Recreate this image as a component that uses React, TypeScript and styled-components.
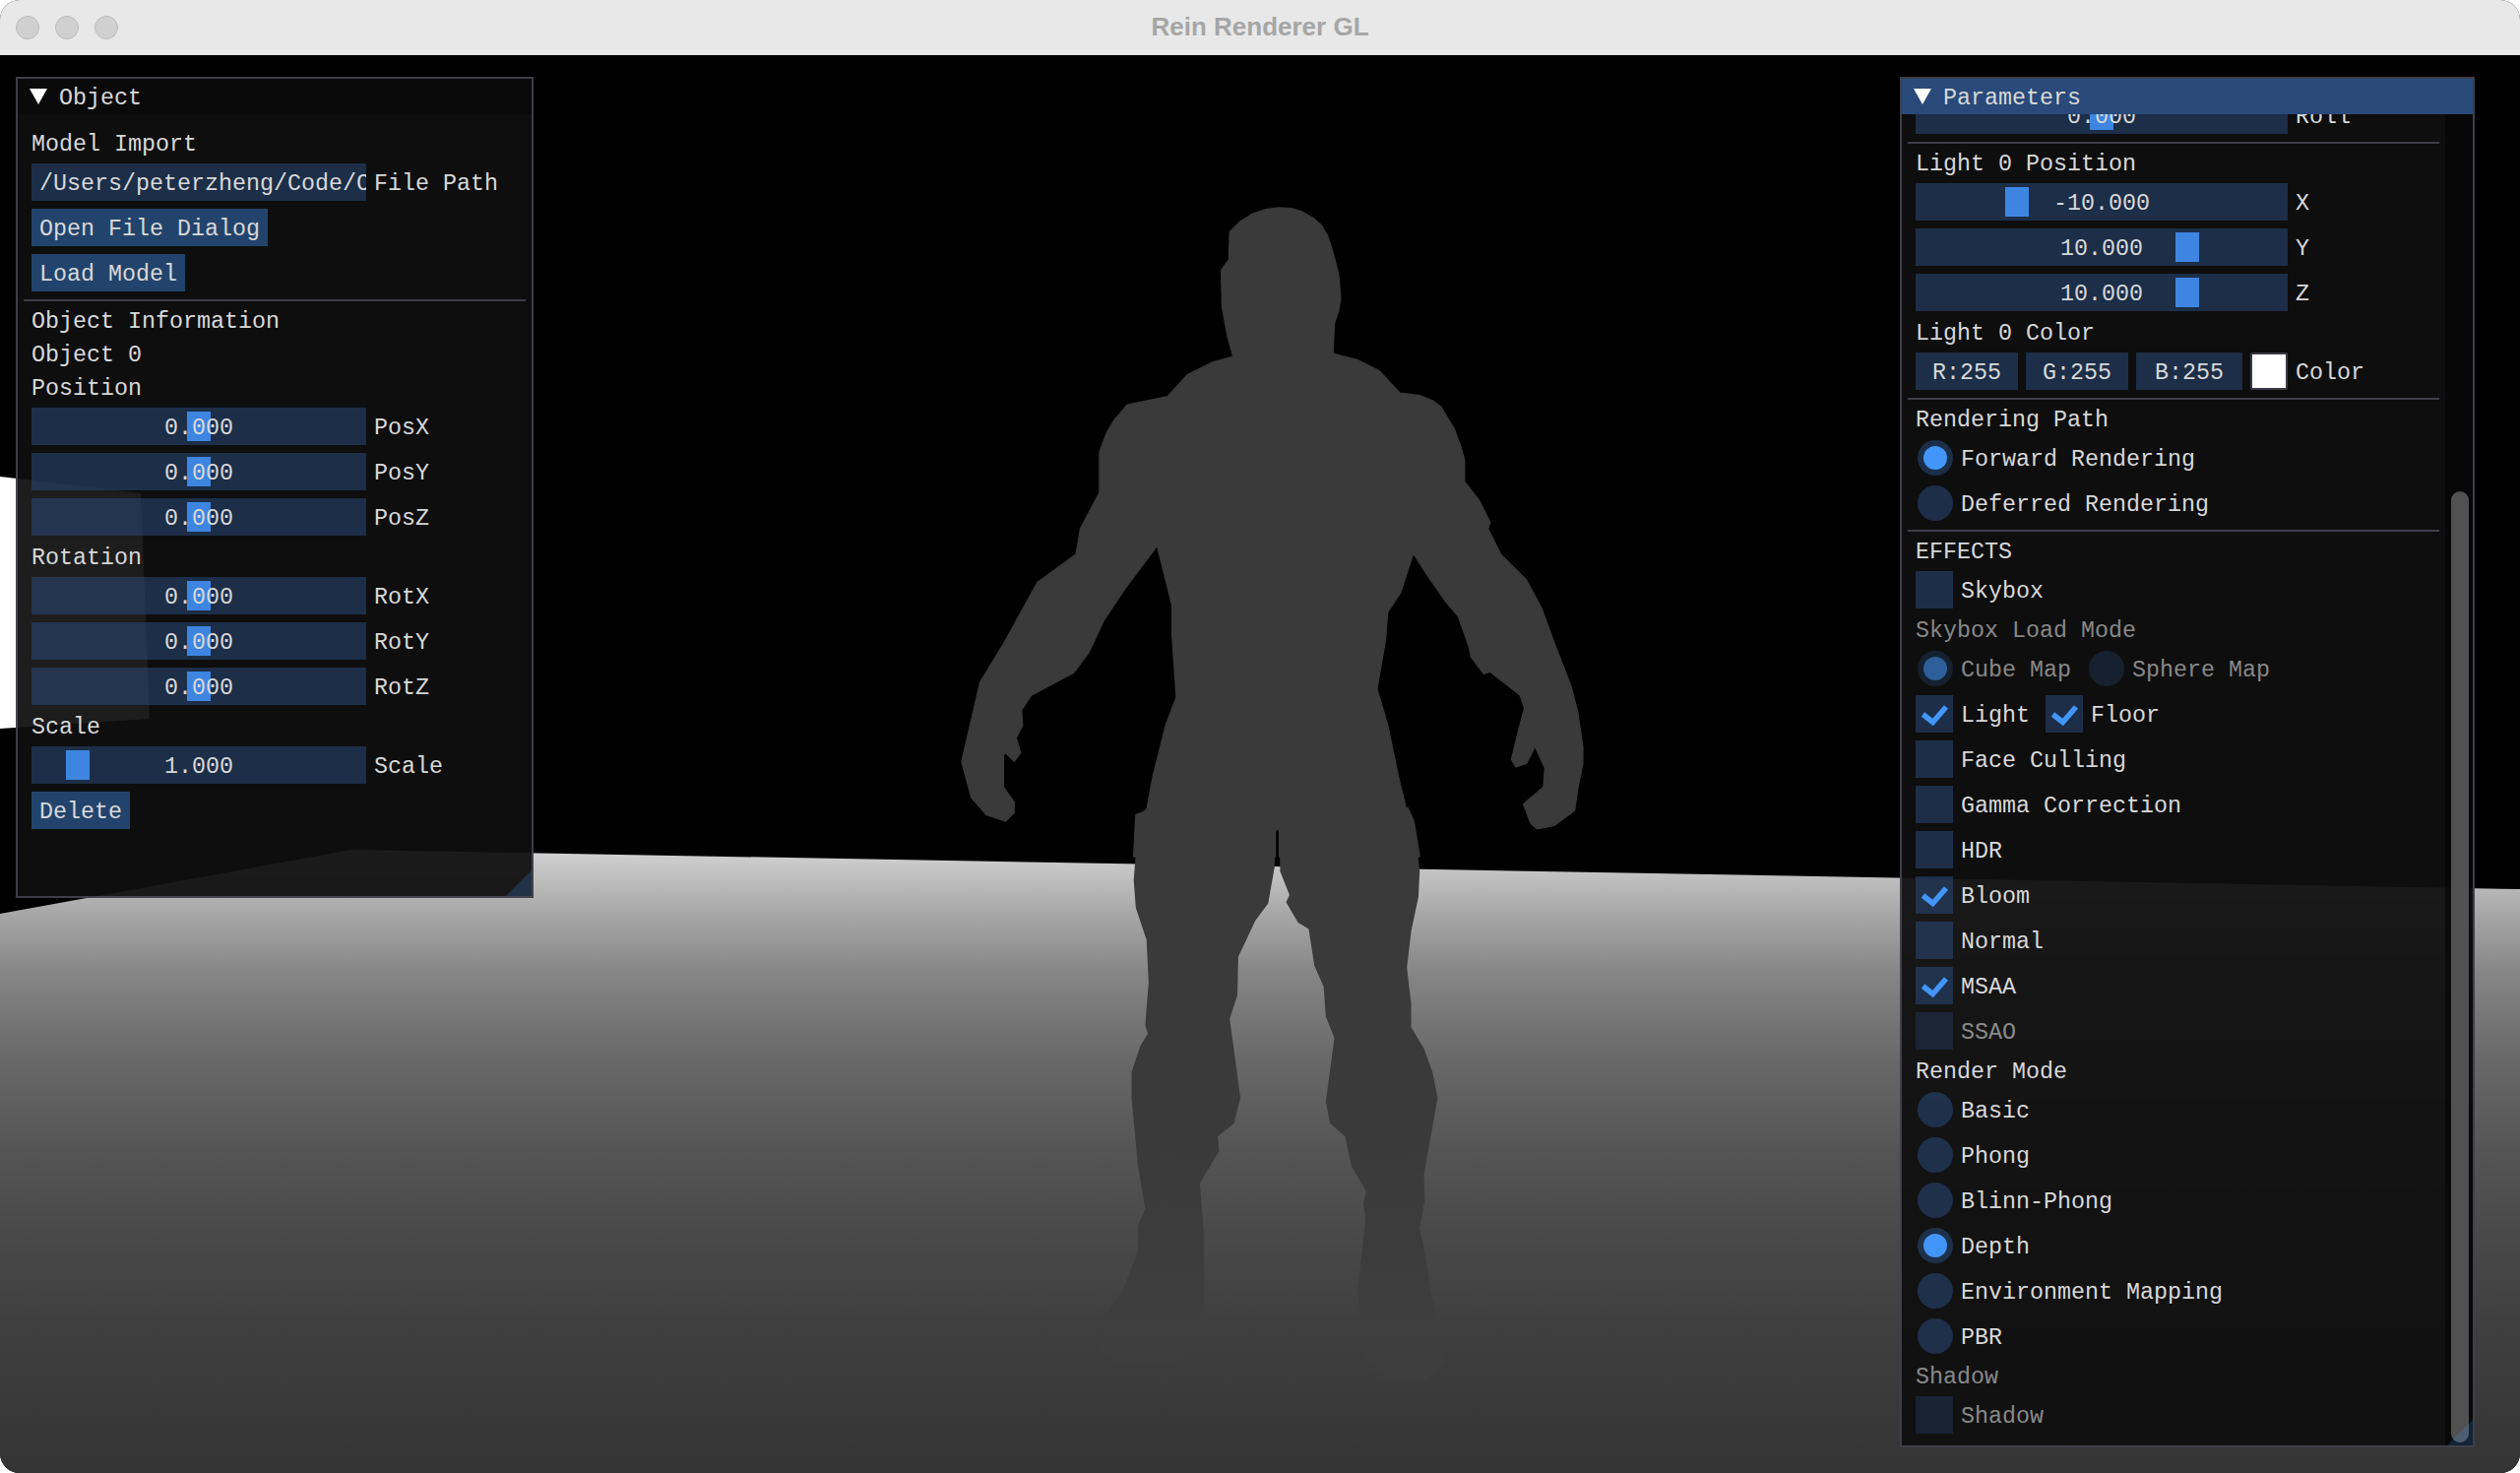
import React from 'react'
import styled, { createGlobalStyle } from 'styled-components'

const GlobalStyle = createGlobalStyle`
	html, body {
		margin: 0;
		padding: 0;
		background: #fff;
	}
	* {
		box-sizing: border-box;
	}
`

const AppWindow = styled.div`
	width: 2560px;
	height: 1496px;
	display: flex;
	flex-direction: column;
	border-radius: 20px;
	overflow: hidden;
	background: #000;
`

const TitleBar = styled.div`
	height: 56px;
	flex: none;
	display: flex;
	align-items: center;
	justify-content: center;
	position: relative;
	padding-bottom: 2px;
	background: #e8e8e8;
	color: #a6a6a6;
	font: bold 26px 'Liberation Sans', Arial, sans-serif;
`

const TrafficLights = styled.div`
	position: absolute;
	left: 16px;
	top: 16px;
	display: flex;
	gap: 16px;
`

const TrafficLight = styled.span`
	width: 24px;
	height: 24px;
	border-radius: 50%;
	background: #d0d0d0;
	border: 1px solid #bababa;
`

const Viewport = styled.div`
	flex: 1;
	position: relative;
	font-family: 'Liberation Mono', 'DejaVu Sans Mono', monospace;
	font-size: 23.33px;
	line-height: 26px;
	color: #d8d8d8;
`

const Scene = styled.svg`
	position: absolute;
	inset: 0;
	width: 100%;
	height: 100%;
	display: block;
`

const Panel = styled.section<{ $left: number; $width: number; $height: number }>`
	position: absolute;
	left: ${p => p.$left}px;
	top: 22px;
	width: ${p => p.$width}px;
	height: ${p => p.$height}px;
	display: flex;
	flex-direction: column;
	background: rgba(15, 15, 15, 0.94);
	border: 2px solid rgba(110, 110, 128, 0.5);
`

const PanelHeader = styled.header<{ $active?: boolean }>`
	height: 36px;
	flex: none;
	display: flex;
	align-items: center;
	gap: 12px;
	padding-left: 12px;
	background: ${p => (p.$active ? '#294a7a' : '#0a0a0a')};
`

const Disclosure = styled.span`
	width: 0;
	height: 0;
	border-style: solid;
	border-width: 16px 9px 0 9px;
	border-color: #fff transparent transparent transparent;
`

const FieldLabel = styled.span`
	padding-top: 4px;
`

const PanelBody = styled.div`
	flex: 1;
	min-height: 0;
	overflow: hidden;
`

const PanelContent = styled.div<{ $scroll: number; $gutter: number }>`
	display: flex;
	flex-direction: column;
	gap: 8px;
	margin-top: ${p => p.$scroll}px;
	padding: 0 ${p => p.$gutter}px 0 14px;
`

const Line = styled.div<{ $dim?: boolean }>`
	height: 26px;
	padding-top: 2px;
	white-space: nowrap;
	opacity: ${p => (p.$dim ? 0.6 : 1)};
`

const Row = styled.div<{ $dim?: boolean; $gap?: number }>`
	height: 38px;
	display: flex;
	align-items: center;
	gap: ${p => p.$gap ?? 8}px;
	white-space: nowrap;
	opacity: ${p => (p.$dim ? 0.6 : 1)};
`

const Frame = styled.div<{ $width: number }>`
	position: relative;
	flex: none;
	width: ${p => p.$width}px;
	height: 38px;
	padding: 0 8px;
	overflow: hidden;
	line-height: 42px;
	text-align: center;
	background: rgba(41, 74, 122, 0.54);
`

const PathFrame = styled(Frame)`
	text-align: left;
`

const FrameText = styled.span`
	position: relative;
`

const Grab = styled.span`
	position: absolute;
	top: 4px;
	bottom: 4px;
	width: 24px;
	background: #3d85e0;
`

const Swatch = styled.span`
	flex: none;
	width: 38px;
	height: 38px;
	border-radius: 2px;
	background: #fff;
	border: 2px solid #3a3a44;
`

const PushButton = styled.button`
	align-self: flex-start;
	height: 38px;
	padding: 4px 8px 0;
	border: 0;
	color: inherit;
	font: inherit;
	background: rgba(66, 150, 250, 0.4);
`

const Separator = styled.hr`
	height: 2px;
	margin: 0 -8px -2px;
	border: 0;
	flex: none;
	background: rgba(110, 110, 128, 0.5);
`

const Option = styled.label`
	display: flex;
	align-items: center;
	gap: 8px;
`

const RadioDisc = styled.span<{ $on?: boolean }>`
	width: 36px;
	height: 36px;
	margin-left: 2px;
	border-radius: 50%;
	display: flex;
	align-items: center;
	justify-content: center;
	background: rgba(41, 74, 122, 0.54);

	&::after {
		content: '';
		width: 24px;
		height: 24px;
		border-radius: 50%;
		background: ${p => (p.$on ? '#4296fa' : 'transparent')};
	}
`

const CheckBox = styled.span`
	width: 38px;
	height: 38px;
	flex: none;
	background: rgba(41, 74, 122, 0.54);
`

const CheckMark = styled.svg`
	display: block;
`

const ScrollTrack = styled.div`
	position: absolute;
	top: 36px;
	right: 0;
	bottom: 0;
	width: 28px;
	background: rgba(2, 2, 2, 0.53);
`

const ScrollThumb = styled.div`
	position: absolute;
	left: 6px;
	width: 18px;
	top: 383px;
	bottom: 3px;
	border-radius: 9px;
	background: #515151;
`

const ResizeGrip = styled.div`
	position: absolute;
	right: 0;
	bottom: 0;
	width: 26px;
	height: 26px;
	clip-path: polygon(100% 0, 100% 100%, 0 100%);
	background: rgba(66, 150, 250, 0.2);
`

const bodyTop =
	'805,48 835,50 860,58 885,72 905,90 918,112 925,130 935,165 945,205 950,260 945,290 935,320 932,390 990,405 1040,430 1088,482 1135,488 1165,500 1185,515 1215,565 1232,610 1240,640 1240,690 1275,735 1300,785 1295,800 1325,860 1385,920 1420,985 1455,1080 1490,1170 1505,1230 1517,1310 1517,1350 1505,1410 1498,1460 1450,1495 1410,1503 1395,1490 1378,1445 1425,1405 1428,1360 1405,1310 1385,1350 1360,1358 1350,1340 1362,1290 1380,1220 1370,1190 1300,1135 1285,1140 1255,1100 1250,1075 1225,1005 1195,970 1150,905 1120,858 1090,950 1060,995 1055,1060 1035,1175 1060,1260 1085,1380 1108,1475 1122,1490 1135,1568 806,1568 806,1505 797,1505 797,1568 465,1568 470,1470 495,1460 510,1380 540,1260 565,1195 555,1050 555,980 520,840 445,940 395,1015 360,1090 325,1137 225,1190 202,1225 205,1260 190,1290 200,1325 185,1345 165,1325 160,1330 160,1405 185,1440 185,1465 165,1485 120,1470 85,1430 78,1405 62,1345 75,1290 105,1160 120,1135 160,1070 240,925 330,860 340,800 385,715 385,620 402,575 420,545 450,510 545,490 590,440 650,410 698,397 685,350 672,280 670,195 688,170 690,105 715,80 745,62 775,52'

const bodyLegs =
	'497,0 797,0 797,55 806,55 806,0 1108,0 1122,30 1135,150 1132,210 1115,290 1105,375 1115,460 1115,515 1145,565 1165,620 1177,680 1145,860 1147,920 1135,985 1150,1060 1160,1130 1195,1260 1195,1300 1150,1340 1050,1340 1005,1290 990,1130 1008,965 1003,925 1010,900 975,840 960,770 925,740 915,690 935,540 915,490 910,420 888,370 875,285 850,270 822,222 830,205 808,150 806,55 797,55 795,140 780,225 750,265 710,350 708,440 690,495 715,680 700,740 662,770 665,805 620,880 630,1000 630,1170 580,1290 540,1310 430,1310 385,1270 390,1200 440,1130 475,1040 475,980 492,940 475,840 460,680 460,620 480,560 498,530 492,510 500,410 495,310 470,235 465,170 470,110 468,60 470,30'

// legs are traced from a crop, so move them to page coordinates for the gradient
const legPoints = bodyLegs
	.split(' ')
	.map(pt => {
		const [x, y] = pt.split(',').map(Number)
		return `${950 + x * 0.4337},${820 + y * 0.4337}`
	})
	.join(' ')

const DepthScene = () => (
	<Scene viewBox='0 56 2560 1440' preserveAspectRatio='none'>
		<defs>
			<linearGradient
				id='floorDepth'
				gradientUnits='userSpaceOnUse'
				x1='0'
				y1='863'
				x2='0'
				y2='1496'>
				<stop offset='0' stopColor='#d2d2d2' />
				<stop offset='0.1' stopColor='#a8a8a8' />
				<stop offset='0.2' stopColor='#858585' />
				<stop offset='0.34' stopColor='#686868' />
				<stop offset='0.48' stopColor='#555555' />
				<stop offset='0.62' stopColor='#494949' />
				<stop offset='0.75' stopColor='#404040' />
				<stop offset='1' stopColor='#343434' />
			</linearGradient>
			<linearGradient
				id='legDepth'
				gradientUnits='userSpaceOnUse'
				x1='0'
				y1='1150'
				x2='0'
				y2='1400'>
				<stop offset='0' stopColor='#3a3a3a' />
				<stop offset='0.45' stopColor='#3c3c3c' />
				<stop offset='0.8' stopColor='#3f3f3f' />
				<stop offset='1' stopColor='#3d3d3d' />
			</linearGradient>
		</defs>
		<polygon points='0,484 143,501 152,730 0,740' fill='#ffffff' />
		<polygon points='0,928 357,863 2560,903 2560,1496 0,1496' fill='url(#floorDepth)' />
		<polygon
			points={bodyTop}
			transform='translate(950 190) scale(0.4337)'
			fill='#3a3a3a'
			stroke='#3a3a3a'
			strokeWidth='3'
			strokeLinejoin='round'
		/>
		<polygon points={legPoints} fill='url(#legDepth)' />
	</Scene>
)

const Slider = ({
	width,
	label,
	value,
	min,
	max,
}: {
	width: number
	label: string
	value: number
	min: number
	max: number
}) => {
	const left = 4 + ((value - min) / (max - min)) * (width - 32)
	return (
		<Row>
			<Frame $width={width}>
				<Grab style={{ left }} />
				<FrameText>{value.toFixed(3)}</FrameText>
			</Frame>
			<FieldLabel>{label}</FieldLabel>
		</Row>
	)
}

const Radio = ({ on, children }: { on?: boolean; children: React.ReactNode }) => (
	<Option>
		<RadioDisc $on={on} />
		<FieldLabel>{children}</FieldLabel>
	</Option>
)

const Check = ({ on, children }: { on?: boolean; children: React.ReactNode }) => (
	<Option>
		<CheckBox>
			{on && (
				<CheckMark width='38' height='38' viewBox='0 0 38 38'>
					<polyline
						points='7.5,19.5 17.5,27.5 31,12'
						fill='none'
						stroke='#4296fa'
						strokeWidth='5.5'
					/>
				</CheckMark>
			)}
		</CheckBox>
		<FieldLabel>{children}</FieldLabel>
	</Option>
)

const ObjectPanel = () => (
	<Panel $left={16} $width={526} $height={834}>
		<PanelHeader>
			<Disclosure />
			<FieldLabel>Object</FieldLabel>
		</PanelHeader>
		<PanelBody>
			<PanelContent $scroll={16} $gutter={14}>
				<Line>Model Import</Line>
				<Row>
					<PathFrame $width={340}>/Users/peterzheng/Code/CG</PathFrame>
					<FieldLabel>File Path</FieldLabel>
				</Row>
				<PushButton>Open File Dialog</PushButton>
				<PushButton>Load Model</PushButton>
				<Separator />
				<Line>Object Information</Line>
				<Line>Object 0</Line>
				<Line>Position</Line>
				<Slider width={340} label='PosX' value={0} min={-10} max={10} />
				<Slider width={340} label='PosY' value={0} min={-10} max={10} />
				<Slider width={340} label='PosZ' value={0} min={-10} max={10} />
				<Line>Rotation</Line>
				<Slider width={340} label='RotX' value={0} min={-180} max={180} />
				<Slider width={340} label='RotY' value={0} min={-180} max={180} />
				<Slider width={340} label='RotZ' value={0} min={-180} max={180} />
				<Line>Scale</Line>
				<Slider width={340} label='Scale' value={1} min={0} max={10} />
				<PushButton>Delete</PushButton>
			</PanelContent>
		</PanelBody>
		<ResizeGrip />
	</Panel>
)

const ParametersPanel = () => (
	<Panel $left={1930} $width={584} $height={1392}>
		<PanelHeader $active>
			<Disclosure />
			<FieldLabel>Parameters</FieldLabel>
		</PanelHeader>
		<PanelBody>
			<PanelContent $scroll={-18} $gutter={42}>
				<Slider width={378} label='Roll' value={0} min={-180} max={180} />
				<Separator />
				<Line>Light 0 Position</Line>
				<Slider width={378} label='X' value={-10} min={-20} max={20} />
				<Slider width={378} label='Y' value={10} min={-20} max={20} />
				<Slider width={378} label='Z' value={10} min={-20} max={20} />
				<Line>Light 0 Color</Line>
				<Row>
					<Frame $width={104}>R:255</Frame>
					<Frame $width={104}>G:255</Frame>
					<Frame $width={108}>B:255</Frame>
					<Swatch />
					<FieldLabel>Color</FieldLabel>
				</Row>
				<Separator />
				<Line>Rendering Path</Line>
				<Row>
					<Radio on>Forward Rendering</Radio>
				</Row>
				<Row>
					<Radio>Deferred Rendering</Radio>
				</Row>
				<Separator />
				<Line>EFFECTS</Line>
				<Row>
					<Check>Skybox</Check>
				</Row>
				<Line $dim>Skybox Load Mode</Line>
				<Row $dim $gap={16}>
					<Radio on>Cube Map</Radio>
					<Radio>Sphere Map</Radio>
				</Row>
				<Row $gap={16}>
					<Check on>Light</Check>
					<Check on>Floor</Check>
				</Row>
				<Row>
					<Check>Face Culling</Check>
				</Row>
				<Row>
					<Check>Gamma Correction</Check>
				</Row>
				<Row>
					<Check>HDR</Check>
				</Row>
				<Row>
					<Check on>Bloom</Check>
				</Row>
				<Row>
					<Check>Normal</Check>
				</Row>
				<Row>
					<Check on>MSAA</Check>
				</Row>
				<Row $dim>
					<Check>SSAO</Check>
				</Row>
				<Line>Render Mode</Line>
				<Row>
					<Radio>Basic</Radio>
				</Row>
				<Row>
					<Radio>Phong</Radio>
				</Row>
				<Row>
					<Radio>Blinn-Phong</Radio>
				</Row>
				<Row>
					<Radio on>Depth</Radio>
				</Row>
				<Row>
					<Radio>Environment Mapping</Radio>
				</Row>
				<Row>
					<Radio>PBR</Radio>
				</Row>
				<Line $dim>Shadow</Line>
				<Row $dim>
					<Check>Shadow</Check>
				</Row>
			</PanelContent>
		</PanelBody>
		<ScrollTrack>
			<ScrollThumb />
		</ScrollTrack>
		<ResizeGrip />
	</Panel>
)

const App = () => (
	<>
		<GlobalStyle />
		<AppWindow>
			<TitleBar>
				<TrafficLights>
					<TrafficLight />
					<TrafficLight />
					<TrafficLight />
				</TrafficLights>
				Rein Renderer GL
			</TitleBar>
			<Viewport>
				<DepthScene />
				<ObjectPanel />
				<ParametersPanel />
			</Viewport>
		</AppWindow>
	</>
)

export default App
